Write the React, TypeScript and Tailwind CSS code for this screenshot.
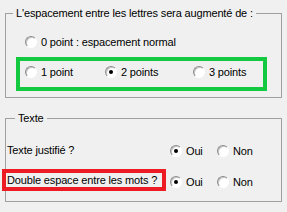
import React from 'react';

function Radio({ checked, label, className = '' }: { checked?: boolean; label: string; className?: string }) {
  return (
    <div className={`flex items-center ${className}`}>
      <span className="flex h-[12px] w-[12px] shrink-0 items-center justify-center rounded-full border border-t-[#8c8c8c] border-l-[#8c8c8c] border-r-white border-b-white bg-white shadow-[inset_1px_1px_0_#c4c4c4]">
        {checked && <span className="h-[4px] w-[4px] rounded-full bg-black" />}
      </span>
      <span className="ml-[4px] whitespace-nowrap">{label}</span>
    </div>
  );
}

export default function App() {
  return (
    <div
      className="h-[212px] w-[287px] overflow-hidden bg-[#f0f0f0] px-[5px] pt-[6px] text-[11px] leading-[14px] tracking-[-0.15px] text-black"
      style={{ fontFamily: '"Liberation Sans", Arial, sans-serif' }}
    >
      {/* Espacement */}
      <fieldset className="w-[277px] border border-[#a0a0a0] pb-[6px]">
        <legend className="ml-[7px] whitespace-nowrap px-[3px]">L'espacement entre les lettres sera augmenté de :</legend>
        <div className="mt-[15px] pl-[19px]">
          <Radio label="0 point : espacement normal" />
        </div>
        <div className="ml-[10px] mt-[8px] flex h-[34px] w-[251px] items-center border-4 border-[#13c940] pb-[4px] pl-[5px]">
          <Radio label="1 point" className="w-[80px]" />
          <Radio checked label="2 points" className="w-[88px]" />
          <Radio label="3 points" />
        </div>
      </fieldset>

      {/* Texte */}
      <fieldset className="mt-[13px] w-[277px] border border-[#a0a0a0] pb-[10px]">
        <legend className="ml-[9px] px-[3px]">Texte</legend>
        <div className="mt-[14px] flex h-[22px] items-center">
          <span className="ml-[1px] w-[163px]">Texte justifié ?</span>
          <div className="mt-[2px] flex">
            <Radio checked label="Oui" className="w-[47px]" />
            <Radio label="Non" />
          </div>
        </div>
        <div className="mt-[8px] flex items-center">
          <div className="-ml-[4px] flex h-[22px] w-[164px] items-center border-4 border-[#ed1c24] pl-[1px]">
            <span className="whitespace-nowrap">Double espace entre les mots ?</span>
          </div>
          <div className="ml-[4px] mt-[3px] flex">
            <Radio checked label="Oui" className="w-[47px]" />
            <Radio label="Non" />
          </div>
        </div>
      </fieldset>
    </div>
  );
}
